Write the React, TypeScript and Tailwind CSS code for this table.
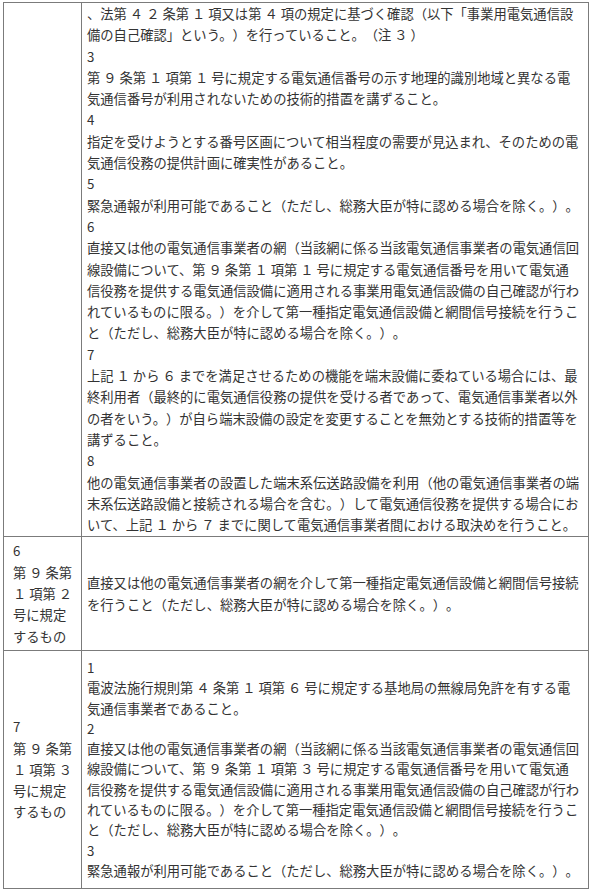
import React from "react";

const conditions1 = [
  "、法第 ４ ２ 条第 １ 項又は第 ４ 項の規定に基づく確認（以下「事業用電気通信設",
  "備の自己確認」という。）を行っていること。（注 ３ ）",
  "3",
  "第 ９ 条第 １ 項第 １ 号に規定する電気通信番号の示す地理的識別地域と異なる電",
  "気通信番号が利用されないための技術的措置を講ずること。",
  "4",
  "指定を受けようとする番号区画について相当程度の需要が見込まれ、そのための電",
  "気通信役務の提供計画に確実性があること。",
  "5",
  "緊急通報が利用可能であること（ただし、総務大臣が特に認める場合を除く。）。",
  "6",
  "直接又は他の電気通信事業者の網（当該網に係る当該電気通信事業者の電気通信回",
  "線設備について、第 ９ 条第 １ 項第 １ 号に規定する電気通信番号を用いて電気通",
  "信役務を提供する電気通信設備に適用される事業用電気通信設備の自己確認が行わ",
  "れているものに限る。）を介して第一種指定電気通信設備と網間信号接続を行うこ",
  "と（ただし、総務大臣が特に認める場合を除く。）。",
  "7",
  "上記 １ から ６ までを満足させるための機能を端末設備に委ねている場合には、最",
  "終利用者（最終的に電気通信役務の提供を受ける者であって、電気通信事業者以外",
  "の者をいう。）が自ら端末設備の設定を変更することを無効とする技術的措置等を",
  "講ずること。",
  "8",
  "他の電気通信事業者の設置した端末系伝送路設備を利用（他の電気通信事業者の端",
  "末系伝送路設備と接続される場合を含む。）して電気通信役務を提供する場合にお",
  "いて、上記 １ から ７ までに関して電気通信事業者間における取決めを行うこと。",
];

const label2 = ["6", "第 ９ 条第", "１ 項第 ２", "号に規定", "するもの"];

const conditions2 = [
  "直接又は他の電気通信事業者の網を介して第一種指定電気通信設備と網間信号接続",
  "を行うこと（ただし、総務大臣が特に認める場合を除く。）。",
];

const label3 = ["7", "第 ９ 条第", "１ 項第 ３", "号に規定", "するもの"];

const conditions3 = [
  "1",
  "電波法施行規則第 ４ 条第 １ 項第 ６ 号に規定する基地局の無線局免許を有する電",
  "気通信事業者であること。",
  "2",
  "直接又は他の電気通信事業者の網（当該網に係る当該電気通信事業者の電気通信回",
  "線設備について、第 ９ 条第 １ 項第 ３ 号に規定する電気通信番号を用いて電気通",
  "信役務を提供する電気通信設備に適用される事業用電気通信設備の自己確認が行わ",
  "れているものに限る。）を介して第一種指定電気通信設備と網間信号接続を行うこ",
  "と（ただし、総務大臣が特に認める場合を除く。）。",
  "3",
  "緊急通報が利用可能であること（ただし、総務大臣が特に認める場合を除く。）。",
];

function Lines({ lines }: { lines: string[] }) {
  return (
    <>
      {lines.map((line, index) => (
        <div key={index} className="whitespace-pre">
          {line}
        </div>
      ))}
    </>
  );
}

export default function App() {
  return (
    <div className="min-h-screen bg-white pl-[3px] pt-[2px] font-['Noto_Sans_CJK_JP','Noto_Sans',sans-serif] text-[13.3px] text-[#333] [text-spacing-trim:space-all]">
      <table className="w-[586px] table-fixed border-collapse">
        <colgroup>
          <col className="w-[78px]" />
          <col />
        </colgroup>
        <tbody>
          <tr>
            <td className="border border-[#7b7b7b]" />
            <td className="border border-[#7b7b7b] pl-[5px] pb-[1px] align-top leading-[21.3px]">
              <Lines lines={conditions1} />
            </td>
          </tr>
          <tr>
            <td className="border border-[#7b7b7b] py-[3px] pl-[9px] align-middle leading-[21.3px]">
              <Lines lines={label2} />
            </td>
            <td className="border border-[#7b7b7b] pl-[5px] align-middle leading-[21.3px]">
              <Lines lines={conditions2} />
            </td>
          </tr>
          <tr>
            <td className="border border-[#7b7b7b] pl-[9px] align-middle leading-[21.3px]">
              <Lines lines={label3} />
            </td>
            <td className="border border-[#7b7b7b] py-[7px] pl-[5px] align-middle leading-[20.3px]">
              <Lines lines={conditions3} />
            </td>
          </tr>
        </tbody>
      </table>
    </div>
  );
}
